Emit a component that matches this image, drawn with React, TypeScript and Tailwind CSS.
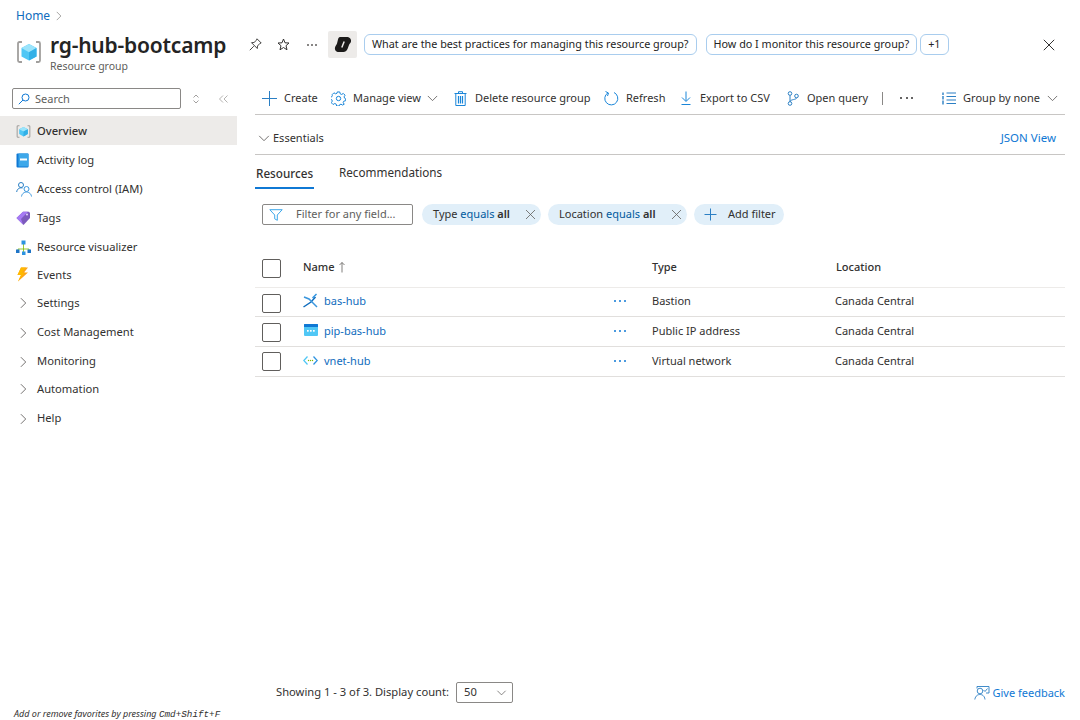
import React from "react";

const font = { fontFamily: '"Noto Sans", "Open Sans", sans-serif' };

const Chevron = ({ dir = "down", className = "" }: { dir?: "down" | "right" | "left"; className?: string }) => {
  const d = dir === "down" ? "M1 1 L6.5 6.5 L12 1" : "M1 1 L6.5 6.5 L1 12";
  const vb = dir === "down" ? "0 0 13 8" : "0 0 8 13";
  return (
    <svg viewBox={vb} className={className} fill="none" stroke="currentColor" strokeWidth="1">
      <path d={d} />
    </svg>
  );
};

const RgIcon = ({ s = 26 }: { s?: number }) => (
  <svg width={s} height={s} viewBox="0 0 26 26">
    <path d="M6 3 H3.500 Q2 3 2 4.500 V21.500 Q2 23 3.500 23 H6 M20 3 H22.500 Q24 3 24 4.500 V21.500 Q24 23 22.500 23 H20" fill="none" stroke="#a19f9d" strokeWidth="1.800" />
    <path d="M13 5 L20.500 9 V17.500 L13 21.500 L5.500 17.500 V9 Z" fill="#50c7f5" />
    <path d="M13 5 L20.500 9 L13 13.200 L5.500 9 Z" fill="#9be4fb" />
    <path d="M13 13.200 L20.500 9 V17.500 L13 21.500 Z" fill="#32b0e7" />
  </svg>
);

const Activity = () => (
  <svg width="13" height="15" viewBox="0 0 13 15">
    <rect x="0.500" y="0.500" width="12" height="14" rx="1" fill="#0f78d4" />
    <rect x="2.500" y="0.500" width="10" height="13" rx="0.500" fill="#3ea8ea" />
    <rect x="4" y="5.500" width="7" height="2" fill="#fff" />
  </svg>
);
const Iam = () => (
  <svg width="16" height="16" viewBox="0 0 16 16" fill="none" stroke="#2b7fc4" strokeWidth="1">
    <circle cx="5" cy="4" r="2.500" />
    <path d="M0.700 11 C1 7.500 4 6.500 6.500 7" />
    <circle cx="10.500" cy="8" r="2.500" stroke="#3a96dd" />
    <path d="M5.500 15.500 C6 12 9 11 10.500 11 C12 11 15 12 15.500 15.500" stroke="#3a96dd" />
  </svg>
);
const Tag = () => (
  <svg width="15" height="15" viewBox="0 0 15 15">
    <path d="M0.500 7 L7 0.800 L13 0.800 L14 2 V7 L7.500 14 Z" fill="#7d5bbd" />
    <path d="M0.500 7 L7 0.800 L12 0.800 L5 8 L7 13.500 Z" fill="#a67af4" />
    <circle cx="11" cy="3.500" r="1" fill="#e3d5f8" />
  </svg>
);
const Viz = () => (
  <svg width="15" height="15" viewBox="0 0 15 15">
    <path d="M7.500 3 V12 M2 9 H13 M2 9 V10 M13 9 V10" stroke="#7fba00" strokeWidth="0.800" fill="none" />
    <rect x="5.500" y="0.500" width="4" height="4" fill="#2d93e0" />
    <rect x="0" y="9.500" width="3.500" height="3.500" fill="#1f75c7" />
    <rect x="11.500" y="9.500" width="3.500" height="3.500" fill="#1f75c7" />
    <rect x="6" y="11.500" width="3.500" height="3.500" fill="#2d93e0" />
  </svg>
);
const Bolt = () => (
  <svg width="13" height="15" viewBox="0 0 13 15">
    <path d="M5 0.500 H12 L8 5.500 H12 L2 14.500 L5 8 H1.500 Z" fill="#fca31d" />
    <path d="M5 0.500 H10 L6 5.500 H9 L2 14.500 L5 8 H1.500 Z" fill="#ffb900" />
  </svg>
);

const navTop = [
  { label: "Overview", icon: <RgIcon s={15} />, h: "h-[29px] pt-[2px]", active: true },
  { label: "Activity log", icon: <Activity />, h: "h-[29px] pt-[2px]" },
  { label: "Access control (IAM)", icon: <Iam />, h: "h-[29px] pt-[2px]" },
  { label: "Tags", icon: <Tag />, h: "h-[29px] pt-[2px]" },
  { label: "Resource visualizer", icon: <Viz />, h: "h-[29px] pt-[2px]" },
  { label: "Events", icon: <Bolt />, h: "h-[28px]" },
];
const navGroups = [
  { label: "Settings", h: "h-[28px]" },
  { label: "Cost Management", h: "h-[29px] pt-[2px]" },
  { label: "Monitoring", h: "h-[29px] pt-[2px]" },
  { label: "Automation", h: "h-[28px]" },
  { label: "Help", h: "h-[29px] pt-[2px]" },
];

const Sidebar = () => (
  <aside className="w-[237px] shrink-0 flex flex-col">
    <div className="flex items-center pl-3 h-[21px]">
      <div className="w-[169px] h-[21px] border border-[#8a8886] rounded-[2px] flex items-center pl-[5px] pt-[1px] gap-[5px] text-[#605e5c] text-[11px]">
        <svg width="12" height="12" viewBox="0 0 12 12" fill="none" stroke="#0f78d4" strokeWidth="1">
          <circle cx="7.500" cy="4.500" r="3.500" />
          <path d="M5 7 L0.800 11.200" />
        </svg>
        Search
      </div>
      <svg width="8" height="10" viewBox="0 0 8 10" className="ml-[11px]" fill="none" stroke="#8a8886" strokeWidth="0.800">
        <path d="M1.500 3.500 L4 1 L6.500 3.500 M1.500 6.500 L4 9 L6.500 6.500" />
      </svg>
      <svg width="9" height="8" viewBox="0 0 9 8" className="ml-[19px]" fill="none" stroke="#a19f9d" strokeWidth="0.800">
        <path d="M4 0.500 L0.500 4 L4 7.500 M8.500 0.500 L5 4 L8.500 7.500" />
      </svg>
    </div>
    <nav className="mt-[7px] flex flex-col text-[11.2px] text-[#323130]">
      {navTop.map((n) => (
        <div key={n.label} className={`flex items-center ${n.h} ${n.active ? "bg-[#edebe9] font-medium" : ""}`}>
          <span className="w-[37px] pl-4 flex items-center justify-start -mt-[1px]">{n.icon}</span>
          {n.label}
        </div>
      ))}
      {navGroups.map((g) => (
        <div key={g.label} className={`flex items-center ${g.h}`}>
          <span className="w-[37px] pl-[20px] flex items-center text-[#605e5c]">
            <Chevron dir="right" className="w-[7px] h-[12px]" />
          </span>
          {g.label}
        </div>
      ))}
    </nav>
  </aside>
);

const Btn = ({ icon, label, caret, className = "" }: { icon: React.ReactNode; label: string; caret?: boolean; className?: string }) => (
  <div className={`flex items-center whitespace-nowrap ${className}`}>
    {icon}
    <span>{label}</span>
    {caret && <Chevron className="w-[11px] h-[7px] -ml-px text-[#605e5c]" />}
  </div>
);

const Toolbar = () => (
  <div className="h-[37px] border-b border-[#c8c6c4] flex items-center pl-[7px] pt-[4px] text-[11px] text-[#323130]">
    <Btn
      className="gap-[7px] w-[69px]"
      label="Create"
      icon={
        <svg width="15" height="15" viewBox="0 0 15 15" stroke="#2b7fc4" strokeWidth="1"><path d="M7.500 0 V15 M0 7.500 H15" /></svg>
      }
    />
    <Btn
      className="gap-[7px] w-[123px]"
      label="Manage view"
      caret
      icon={
        <svg width="15" height="15" viewBox="0 0 24 24" fill="none" stroke="#1a86d9" strokeWidth="1.600">
          <circle cx="12" cy="12" r="3.500" />
          <path d="M10 1.500h4l.7 3 2.300 1 2.700-1.600 2.800 2.800L20.900 9.400l1 2.300 1.600.8v3l-3 .7-1 2.300 1.600 2.700-2.800 1.300-2.300-1.500-2.300 1-.7 2h-4l-.7-3-2.300-1-2.700 1.600-2.800-2.800 1.600-2.700-1-2.300-3-.7v-3l3-.7 1-2.300L1.900 5.700l2.800-2.800 2.700 1.600 2.300-1z" />
        </svg>
      }
    />
    <Btn
      className="gap-[8px] w-[150px]"
      label="Delete resource group"
      icon={
        <svg width="13" height="15" viewBox="0 0 13 15" fill="none" stroke="#1a86d9" strokeWidth="1">
          <path d="M0.500 2.500 H12.500 M4.500 2.500 V0.700 H8.500 V2.500" />
          <path d="M1.800 2.500 V14.500 H11.200 V2.500" />
          <path d="M4.500 5 V12.500 M6.500 5 V12.500 M8.500 5 V12.500" strokeWidth="1.200" />
        </svg>
      }
    />
    <Btn
      className="gap-[7px] w-[76px]"
      label="Refresh"
      icon={
        <svg width="15" height="15" viewBox="0 0 15 15" fill="none" stroke="#1a86d9" strokeWidth="1">
          <path d="M4 1.800 A6.500 6.500 0 1 0 10 1.500" />
          <path d="M1.500 0.500 L4.500 2 L3.500 5" />
        </svg>
      }
    />
    <Btn
      className="gap-[8px] w-[107px]"
      label="Export to CSV"
      icon={
        <svg width="12" height="14" viewBox="0 0 12 14" fill="none" stroke="#1a86d9" strokeWidth="1">
          <path d="M6 0.500 V10 M2 6.500 L6 10.500 L10 6.500 M1.500 13.500 H10.500" />
        </svg>
      }
    />
    <Btn
      className="gap-[8px]"
      label="Open query"
      icon={
        <svg width="12" height="15" viewBox="0 0 12 15" fill="none" stroke="#2b7fc4" strokeWidth="1">
          <circle cx="3" cy="2.500" r="1.800" />
          <circle cx="3" cy="12.500" r="1.800" />
          <circle cx="9.500" cy="5" r="1.800" />
          <path d="M3 4.300 V10.700 M9.500 6.800 C9.500 9 3.500 8 3 10.700" />
        </svg>
      }
    />
    <div className="w-px h-[13px] bg-[#8a8886] ml-[14px]" />
    <div className="ml-[17px] flex gap-[3.500px]">
      <i className="w-[2px] h-[2px] rounded-full bg-[#323130]" />
      <i className="w-[2px] h-[2px] rounded-full bg-[#323130]" />
      <i className="w-[2px] h-[2px] rounded-full bg-[#323130]" />
    </div>
    <div className="ml-auto mr-[7px] flex items-center gap-[7px]">
      <svg width="14" height="13" viewBox="0 0 14 13" fill="none" stroke="#2b7fc4" strokeWidth="1">
        <path d="M4.500 1 H14 M4.500 4.500 H14 M4.500 8 H14 M4.500 11.500 H14" />
        <path d="M1 0.500 V3 M1 4 V7.500 M1 8.500 V12.500" strokeWidth="1.400" />
      </svg>
      <span>Group by none</span>
      <Chevron className="w-[11px] h-[7px] text-[#605e5c]" />
    </div>
  </div>
);

const Pill = ({ a, v, w }: { a: string; v: string; w: string }) => (
  <div className={`${w} h-[21px] rounded-full bg-[#e1eff9] flex items-center justify-between pl-[11px] pr-[5px] text-[11px] text-[#323130] whitespace-nowrap`}>
    <span>
      {a} <span className="text-[#005a9e]">equals</span> <b className="font-semibold">{v}</b>
    </span>
    <svg width="11" height="11" viewBox="0 0 11 11" stroke="#605e5c" strokeWidth="0.800"><path d="M1 1 L10 10 M10 1 L1 10" /></svg>
  </div>
);

const Filters = () => (
  <div className="mt-[15px] pl-[7px] flex items-center gap-[7px]">
    <div className="w-[151px] h-[21px] mr-[2px] border border-[#8a8886] rounded-[2px] flex items-center pl-[6px] gap-[13px] text-[11px] text-[#605e5c]">
      <svg width="14" height="12" viewBox="0 0 14 12" fill="none" stroke="#3ea8ea" strokeWidth="1">
        <path d="M0.800 0.700 H13.200 L8.300 6 V11.300 L5.700 9.800 V6 Z" />
      </svg>
      Filter for any field...
    </div>
    <Pill a="Type" v="all" w="w-[119px]" />
    <Pill a="Location" v="all" w="w-[139px]" />
    <div className="w-[90px] h-[21px] rounded-full bg-[#e1eff9] flex items-center pl-[10px] gap-[11px] text-[11px] text-[#323130]">
      <svg width="13" height="13" viewBox="0 0 13 13" stroke="#2b7fc4" strokeWidth="1"><path d="M6.500 0.500 V12.500 M0.500 6.500 H12.500" /></svg>
      Add filter
    </div>
  </div>
);

const Check = ({ className = "" }: { className?: string }) => (
  <span className={`block w-[19px] h-[19px] border border-[#605e5c] rounded-[2px] ${className}`} />
);

const Bastion = () => (
  <svg width="15" height="15" viewBox="0 0 15 15" fill="none" strokeWidth="1.500">
    <path d="M0.500 14 L8 9 L12.500 4" stroke="#0f6cbd" />
    <path d="M1 4 L6 6 L10 10 L14 14" stroke="#3a96dd" />
    <path d="M9.500 5 L13.500 1" stroke="#2d93e0" />
  </svg>
);
const Pip = () => (
  <svg width="14" height="12" viewBox="0 0 14 12">
    <rect width="14" height="12" rx="1" fill="#50c7f5" />
    <rect width="14" height="3" rx="0.500" fill="#0f78d4" />
    <rect x="3" y="6" width="1.700" height="1.700" fill="#fff" />
    <rect x="6" y="6" width="1.700" height="1.700" fill="#fff" />
    <rect x="9" y="6" width="1.700" height="1.700" fill="#fff" />
  </svg>
);
const Vnet = () => (
  <svg width="15" height="11" viewBox="0 0 15 11" fill="none" strokeWidth="1.300">
    <path d="M4.500 1.500 L0.800 5.500 L4.500 9.500" stroke="#50c7f5" />
    <path d="M10.500 1.500 L14.200 5.500 L10.500 9.500" stroke="#2d93e0" />
    <circle cx="5.500" cy="5.500" r="0.700" fill="#7fba00" stroke="none" />
    <circle cx="7.500" cy="5.500" r="0.700" fill="#7fba00" stroke="none" />
    <circle cx="9.500" cy="5.500" r="0.700" fill="#7fba00" stroke="none" />
  </svg>
);

const rows = [
  { name: "bas-hub", type: "Bastion", icon: <Bastion />, h: "h-[29px]", t: "-mt-[2px]", c: "mt-[2px]" },
  { name: "pip-bas-hub", type: "Public IP address", icon: <Pip />, h: "h-[30px]", t: "-mt-[1px]", c: "mt-[2px]" },
  { name: "vnet-hub", type: "Virtual network", icon: <Vnet />, h: "h-[30px]", t: "-mt-[1px]", c: "" },
];

const Table = () => (
  <div className="mt-[25px] text-[11px] text-[#323130]">
    <div className="h-[38px] flex items-center border-b border-[#edebe9]">
      <span className="w-[48px] pl-[7px]"><Check /></span>
      <span className="w-[349px] font-medium flex items-center gap-[4px] -mt-[2px]">
        Name
        <svg width="6" height="11" viewBox="0 0 6 11" fill="none" stroke="#605e5c" strokeWidth="0.800"><path d="M3 0.500 V10.500 M0.500 3 L3 0.500 L5.500 3" /></svg>
      </span>
      <span className="w-[184px] font-medium -mt-[2px]">Type</span>
      <span className="font-medium -mt-[2px]">Location</span>
    </div>
    {rows.map((r) => (
      <div key={r.name} className={`${r.h} flex items-center border-b border-[#e1dfdd]`}>
        <span className="w-[48px] pl-[7px]"><Check className={r.c} /></span>
        <span className={`w-[310px] flex items-center gap-[6px] text-[#0f6cbd] ${r.t}`}>
          <span className="w-[15px] flex justify-center -mt-[2px]">{r.icon}</span>
          {r.name}
        </span>
        <span className={`w-[39px] flex gap-[3px] pl-px ${r.t}`}>
          <i className="w-[2px] h-[2px] rounded-full bg-[#0f78d4]" />
          <i className="w-[2px] h-[2px] rounded-full bg-[#0f78d4]" />
          <i className="w-[2px] h-[2px] rounded-full bg-[#0f78d4]" />
        </span>
        <span className={`w-[183px] ${r.t}`}>{r.type}</span>
        <span className={r.t}>Canada Central</span>
      </div>
    ))}
  </div>
);

const Header = () => (
  <header className="pl-4 pr-[25px] shrink-0">
    <div className="h-[31px] flex items-center gap-[6px] text-[12px] text-[#0f6cbd]">
      Home
      <Chevron dir="right" className="w-[6px] h-[10px] text-[#8a8886]" />
    </div>
    <div className="h-[45px] flex items-start">
      <span className="w-[34px] pt-[8px]"><RgIcon /></span>
      <div className="w-[186px]">
        <div className="text-[21px] leading-[28px] font-semibold text-[#242424] tracking-[-0.2px] whitespace-nowrap">rg-hub-bootcamp</div>
        <div className="text-[10.500px] leading-[13px] text-[#605e5c] mt-[1px]">Resource group</div>
      </div>
      <div className="h-[27px] pl-[13px] flex items-center">
        <svg width="13" height="13" viewBox="0 0 13 13" fill="none" stroke="#323130" strokeWidth="0.900">
          <path d="M8 0.800 L12.200 5 L10.800 5.500 L8.500 8 L8.300 10.500 L2.500 4.700 L5 4.500 L7.500 2.200 Z M4.800 8.200 L0.800 12.200" />
        </svg>
        <svg width="13" height="13" viewBox="0 0 13 13" fill="none" stroke="#323130" strokeWidth="1" className="ml-[15px]">
          <path d="M6.500 1 L8 4.800 L12 5 L9 7.700 L10 11.800 L6.500 9.500 L3 11.800 L4 7.700 L1 5 L5 4.800 Z" />
        </svg>
        <div className="ml-[17px] flex gap-[2px]">
          <i className="w-[2px] h-[2px] rounded-full bg-[#605e5c]" />
          <i className="w-[2px] h-[2px] rounded-full bg-[#605e5c]" />
          <i className="w-[2px] h-[2px] rounded-full bg-[#605e5c]" />
        </div>
        <div className="ml-[11px] w-[29px] h-[27px] rounded-[2px] bg-[#edebe9] flex items-center justify-center">
          <svg width="18" height="17" viewBox="0 0 18 17">
            <path d="M6 1 H12.500 C15.500 1 17.500 3 17 5.500 C16.800 7 15.500 7.500 15 9 L13.500 13 C12.800 15 11 16 9.500 16 H5 C2 16 0.500 14 1 11.500 C1.300 10 2.500 9 3 7.500 L4 3.500 C4.300 2 5 1 6 1 Z" fill="#1b1a19" />
            <path d="M10.200 5.500 L7.800 11.500" stroke="#edebe9" strokeWidth="1.500" />
          </svg>
        </div>
        <div className="ml-[7px] flex items-center text-[10.800px] text-[#242424] whitespace-nowrap">
          <span className="h-[21px] flex items-center px-[7px] rounded-[6px] border border-[#a9cdee] mr-[9px]">What are the best practices for managing this resource group?</span>
          <span className="h-[21px] flex items-center px-[7px] rounded-[6px] border border-[#a9cdee] mr-[3px]">How do I monitor this resource group?</span>
          <span className="h-[21px] flex items-center px-[7px] rounded-[6px] border border-[#a9cdee]">+1</span>
        </div>
      </div>
      <svg width="12" height="12" viewBox="0 0 12 12" stroke="#323130" strokeWidth="1" className="ml-auto mt-[8px]">
        <path d="M0.800 0.800 L11.200 11.200 M11.200 0.800 L0.800 11.200" />
      </svg>
    </div>
  </header>
);

const Footer = () => (
  <footer className="shrink-0 flex items-start justify-between pr-[15px] pl-[276px] text-[11.2px] text-[#323130]">
    <div className="flex items-center gap-[7px] whitespace-nowrap">
      Showing 1 - 3 of 3. Display count:
      <div className="w-[57px] h-[21px] border border-[#8a8886] rounded-[2px] flex items-center justify-between pl-[7px] pr-[5px]">
        50
        <Chevron className="w-[11px] h-[6px] text-[#605e5c]" />
      </div>
    </div>
    <div className="flex items-center gap-[2px] text-[#0f78d4] mt-[3px] text-[11px]">
      <svg width="16" height="16" viewBox="0 0 16 16" fill="none" stroke="#2b7fc4" strokeWidth="0.900">
        <path d="M3 3.500 V1.500 H15 V8 H12" />
        <circle cx="6" cy="6" r="2.800" />
        <path d="M0.800 14.500 C1.500 10.500 4 9.500 6 9.500 C8 9.500 10.500 10.500 11 14.500" />
        <path d="M9.500 5 L11 6.500 L13.500 3.500" />
      </svg>
      Give feedback
    </div>
  </footer>
);

export default function App() {
  return (
    <div style={font} className="w-[1080px] h-[720px] bg-white flex flex-col overflow-hidden">
      <Header />
      <div className="mt-[12px] flex flex-1 min-h-0">
        <Sidebar />
        <main className="flex-1 min-w-0 pl-[18px] pr-[15px] -mt-[10px]">
          <Toolbar />
          <div className="h-[40px] border-b border-[#c8c6c4] flex items-center justify-between pl-[3px] pt-[6px] text-[11px] text-[#323130]">
            <div className="flex items-center gap-[3px] pt-[1px]">
              <Chevron className="w-[12px] h-[7px] text-[#605e5c]" />
              Essentials
            </div>
            <span className="text-[#0f78d4] pr-[9px] text-[11.500px]">JSON View</span>
          </div>
          <div className="mt-[5px] flex items-start text-[11.700px] text-[#323130]">
            <div className="border-b-2 border-[#0f78d4] px-[1px] h-[29px] w-[59px] flex items-center font-medium whitespace-nowrap">Resources</div>
            <div className="ml-[25px] h-[26px] flex items-center">Recommendations</div>
          </div>
          <Filters />
          <Table />
        </main>
      </div>
      <Footer />
      <div className="h-[17px] shrink-0 pl-[14px] pt-[5px] text-[9px] italic text-[#323130] leading-[12px]">
        Add or remove favorites by pressing <span className="font-['Liberation_Mono',monospace] text-[9.300px]">Cmd+Shift+F</span>
      </div>
    </div>
  );
}
